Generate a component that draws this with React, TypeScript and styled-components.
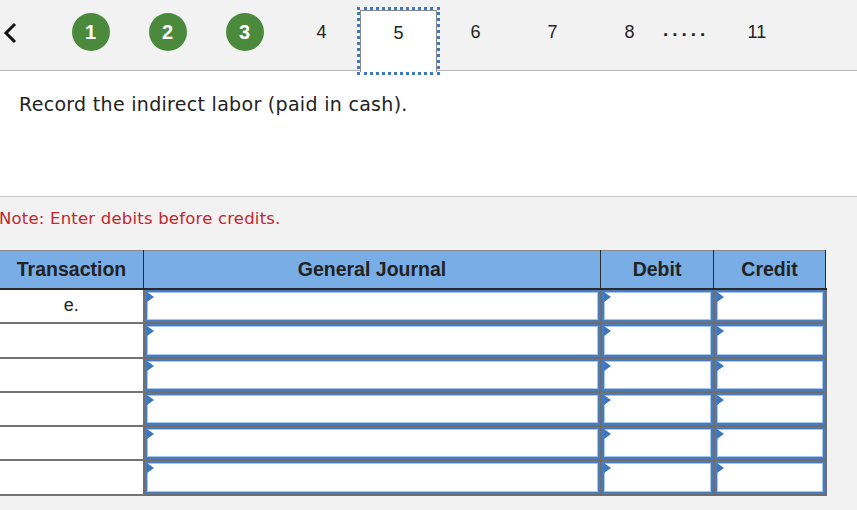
import React from 'react';
import styled, { createGlobalStyle } from 'styled-components';

const GlobalStyle = createGlobalStyle`
  body {
    margin: 0;
    background: #f2f2f2;
    font-family: "Liberation Sans", Arial, sans-serif;
  }
`;

const Page = styled.div`
  width: 857px;
  height: 510px;
  overflow: hidden;
  background: #f2f2f2;
`;

const Nav = styled.nav`
  height: 70px;
  border-bottom: 1px solid #b8b8b8;
  display: flex;
  align-items: flex-start;
`;

const BackButton = styled.button`
  width: 52px;
  height: 70px;
  padding: 0 0 0 3px;
  border: none;
  background: none;
  display: flex;
  align-items: flex-start;
  padding-top: 22px;
  cursor: pointer;
`;

const Step = styled.div<{ $done?: boolean }>`
  width: 77px;
  height: 38px;
  margin-top: 13px;
  display: flex;
  align-items: center;
  justify-content: center;
  font-size: 18px;
  color: #222;
`;

const Circle = styled.span`
  width: 38px;
  height: 38px;
  border-radius: 50%;
  background: #4b8a3d;
  color: #fff;
  font-weight: bold;
  font-size: 20px;
  display: flex;
  align-items: center;
  justify-content: center;
`;

const CurrentStep = styled.div`
  box-sizing: border-box;
  width: 77px;
  height: 62px;
  margin-top: 10px;
  padding-top: 11px;
  border: 1px solid #8a8a8a;
  border-bottom: none;
  background: #fff;
  outline: 3px dotted #3c78c3;
  outline-offset: 0px;
  text-align: center;
  font-size: 18px;
  line-height: 22px;
  color: #222;
`;

const Dots = styled.span`
  margin-left: -5px;
  margin-top: 20px;
  font-size: 19px;
  font-weight: bold;
  letter-spacing: 4px;
  color: #222;
  line-height: 20px;
`;

const LastStep = styled(Step)`
  margin-left: 9px;
`;

const Question = styled.section`
  height: 126px;
  background: #fff;
  border-bottom: 1px solid #c8c8c8;
  box-sizing: border-box;
  padding: 22px 0 0 19px;
  font-family: "DejaVu Sans", Verdana, sans-serif;
  font-size: 19px;
  letter-spacing: 0.3px;
  line-height: 22px;
  color: #222;
`;

const Note = styled.p`
  margin: 12px 0 21px -1px;
  font-family: "DejaVu Sans", Verdana, sans-serif;
  font-size: 16.5px;
  line-height: 20px;
  letter-spacing: 0.2px;
  color: #c1272d;
`;

const Journal = styled.table`
  width: 822px;
  border-collapse: collapse;
  table-layout: fixed;
`;

const HeadCell = styled.th<{ $w: number }>`
  width: ${p => p.$w}px;
  height: 37px;
  padding: 0;
  background: #78ade5;
  border: 1px solid #2a2a2a;
  border-top-color: #8a8a8a;
  border-bottom-width: 2px;
  font-size: 19.5px;
  font-weight: bold;
  color: #222;
  text-align: center;
  &:first-child { border-left: none; }
`;

const LabelCell = styled.td`
  height: 32.3px;
  padding: 0;
  background: #fff;
  border-bottom: 2px solid #737373;
  text-align: center;
  vertical-align: top;
  font-size: 18px;
  line-height: 30px;
  color: #222;
`;

const EntryCell = styled.td`
  height: 32.3px;
  padding: 0;
  border: 2px solid #6e6e6e;
  background: #6e6e6e;
`;

const EntryBox = styled.div`
  position: relative;
  box-sizing: border-box;
  height: 32.3px;
  background: #fff;
  border: 2px solid #4a7cbd;
  box-shadow: inset 0 0 0 1px #a8c5ea;

  &::before {
    content: '';
    position: absolute;
    left: 0;
    top: 0;
    border-top: 5px solid transparent;
    border-bottom: 5px solid transparent;
    border-left: 7px solid #3b76c0;
  }
`;

const rows = ['e.', '', '', '', '', ''];

export default function App() {
  return (
    <Page>
      <GlobalStyle />
      <Nav>
        <BackButton aria-label="Previous">
          <svg width="14" height="22" viewBox="0 0 14 22">
            <polyline points="12,2 3,11 12,20" fill="none" stroke="#111" strokeWidth="3" />
          </svg>
        </BackButton>
        {[1, 2, 3].map(n => (
          <Step key={n} $done>
            <Circle>{n}</Circle>
          </Step>
        ))}
        <Step>4</Step>
        <CurrentStep>5</CurrentStep>
        <Step>6</Step>
        <Step>7</Step>
        <Step>8</Step>
        <Dots>.....</Dots>
        <LastStep>11</LastStep>
      </Nav>
      <Question>Record the indirect labor (paid in cash).</Question>
      <Note>Note: Enter debits before credits.</Note>
      <Journal>
        <thead>
          <tr>
            <HeadCell $w={143}>Transaction</HeadCell>
            <HeadCell $w={456}>General Journal</HeadCell>
            <HeadCell $w={112}>Debit</HeadCell>
            <HeadCell $w={111}>Credit</HeadCell>
          </tr>
        </thead>
        <tbody>
          {rows.map((label, i) => (
            <tr key={i}>
              <LabelCell>{label}</LabelCell>
              <EntryCell><EntryBox /></EntryCell>
              <EntryCell><EntryBox /></EntryCell>
              <EntryCell><EntryBox /></EntryCell>
            </tr>
          ))}
        </tbody>
      </Journal>
    </Page>
  );
}
